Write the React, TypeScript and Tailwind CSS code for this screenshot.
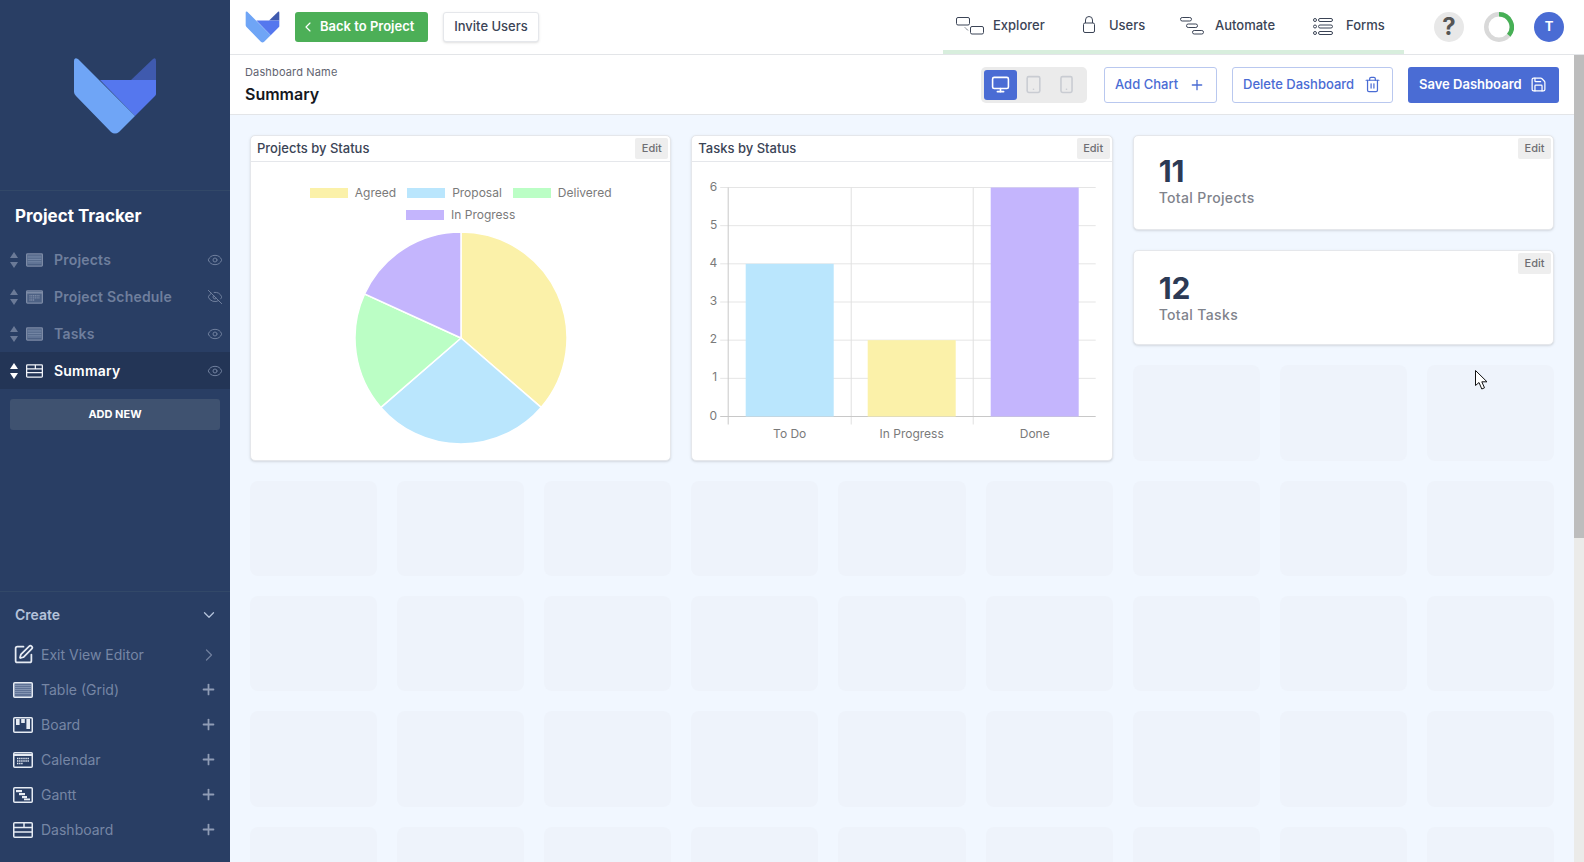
import React from "react";
import { ChevronDown, ChevronLeft, ChevronRight, Eye, EyeOff, Monitor, Plus, Save, Smartphone, SquarePen, Tablet, Trash2 } from "lucide-react";

function Logo({ className }: { className: string }) {
  return (
    <svg viewBox="0 0 84 78" className={className}>
      <path d="M58 23 L80 2 Q83 0 83 4 V23 Z" fill="#3f5aae" />
      <path d="M27 23 H83 V37 Q83 38 82 39 L62 59 Z" fill="#5577ee" />
      <path d="M1 4 Q1 0 5 2 L62 59 L46 75 Q42 78 38 75 L3 39 Q1 37 1 35 Z" fill="#6fa5f6" />
    </svg>
  );
}

// small view type icons used in the sidebar
function ViewIcon({ type, className, line, fill }: { type: string; className: string; line: string; fill: string }) {
  return (
    <svg viewBox="0 0 20 16" className={className} fill="none">
      {type !== "dashboard" && <rect x="1" y="1" width="18" height="14" fill={fill} />}
      <rect x="0.75" y="0.75" width="18.5" height="14.5" rx="1" stroke={line} strokeWidth="1.5" />
      {type === "table" &&
        [3.5, 5.5, 7.5, 9.5, 11.5].map((y) => <path key={y} d={`M2 ${y}H18`} stroke="#93a3bf" strokeWidth="0.7" />)}
      {type === "calendar" && (
        <>
          <path d="M1 3H19" stroke={line} strokeWidth="2" />
          <path d="M4 6.5H16M4 9H16" stroke={line} strokeWidth="1.6" strokeDasharray="1.4 0.7" />
          <path d="M4 11.5H10" stroke={line} strokeWidth="1.6" strokeDasharray="1.4 0.7" />
        </>
      )}
      {type === "board" && (
        <>
          <rect x="3" y="2" width="3.6" height="6" fill={line} />
          <rect x="8.2" y="2" width="3.6" height="4" fill={line} />
          <rect x="13.4" y="2" width="3.6" height="10" fill={line} />
        </>
      )}
      {type === "gantt" && (
        <>
          <rect x="3" y="3" width="6" height="2.2" fill={line} />
          <rect x="6" y="6" width="6" height="2.2" fill={line} />
          <rect x="9" y="9" width="5" height="2.2" fill={line} />
          <rect x="11" y="11.5" width="6" height="1.8" fill={line} />
        </>
      )}
      {type === "dashboard" && <path d="M1 5.5H19M1 10H19M11 1V5.5" stroke={line} strokeWidth="1.5" />}
    </svg>
  );
}

const views = [
  { name: "Projects", icon: "table", hidden: false, active: false },
  { name: "Project Schedule", icon: "calendar", hidden: true, active: false },
  { name: "Tasks", icon: "table", hidden: false, active: false },
  { name: "Summary", icon: "dashboard", hidden: false, active: true },
];

const creators = [
  { name: "Table (Grid)", icon: "table", fill: "#5f7296" },
  { name: "Board", icon: "board", fill: "transparent" },
  { name: "Calendar", icon: "calendar", fill: "transparent" },
  { name: "Gantt", icon: "gantt", fill: "transparent" },
  { name: "Dashboard", icon: "dashboard", fill: "transparent" },
];

function Sidebar() {
  return (
    <aside className="flex h-full w-[230px] shrink-0 flex-col bg-[#293e64]">
      <div className="flex h-[191px] shrink-0 items-start justify-center border-b border-[#324868] pt-[57px]">
        <Logo className="h-[78px] w-[84px]" />
      </div>
      <div className="flex h-[50px] shrink-0 items-center pl-[15px] pt-[2px] text-[17px] font-bold text-white">Project Tracker</div>
      {views.map((v) => (
        <div key={v.name} className={`flex h-[37px] shrink-0 items-center pl-[10px] pr-[7px] ${v.active ? "bg-[#233556]" : ""}`}>
          <div className={`flex w-[8px] flex-col gap-[4px] ${v.active ? "text-white" : "text-[#6b7a97]"}`}>
            <svg viewBox="0 0 8 6" className="h-[6px] w-[8px]" fill="currentColor"><path d="M4 0L8 6H0Z" /></svg>
            <svg viewBox="0 0 8 6" className="h-[6px] w-[8px]" fill="currentColor"><path d="M0 0H8L4 6Z" /></svg>
          </div>
          <ViewIcon
            type={v.icon}
            className="ml-2 h-[14px] w-[17px]"
            line={v.active ? "#f1f4f9" : "#7d8ba6"}
            fill={v.active ? "transparent" : "#4d6184"}
          />
          <span className={`ml-[11px] flex-1 text-[14px] font-semibold tracking-[0.2px] ${v.active ? "text-white" : "text-[#6f7f9d]"}`}>{v.name}</span>
          {v.hidden ? (
            <EyeOff className="h-[16px] w-[16px] text-[#6f7f9d]" strokeWidth={1.5} />
          ) : (
            <Eye className="h-[16px] w-[16px] text-[#6f7f9d]" strokeWidth={1.5} />
          )}
        </div>
      ))}
      <button className="mx-[10px] mt-[10px] h-[31px] shrink-0 rounded-[3px] bg-[#3f5270] text-[11px] font-bold text-white">ADD NEW</button>

      <div className="mt-auto h-[271px] shrink-0 border-t border-[#324868]">
        <div className="flex h-[45px] items-center justify-between pl-[15px] pr-[12px]">
          <span className="text-[14px] font-semibold text-[#b4c2da]">Create</span>
          <ChevronDown className="h-[18px] w-[18px] text-[#b4c2da]" strokeWidth={1.75} />
        </div>
        <div className="flex h-[35px] items-center pl-[13px] pr-[11px]">
          <SquarePen className="h-[21px] w-[21px] text-[#e6ebf3]" strokeWidth={2} />
          <span className="ml-[7px] flex-1 text-[14px] text-[#7686a4]">Exit View Editor</span>
          <ChevronRight className="h-[20px] w-[20px] text-[#6f7f9d]" strokeWidth={1.5} />
        </div>
        {creators.map((c) => (
          <div key={c.name} className="flex h-[35px] items-center pl-[13px] pr-[13px]">
            <ViewIcon type={c.icon} className="h-[16px] w-[20px]" line="#e6ebf3" fill={c.fill} />
            <span className="ml-[8px] flex-1 text-[14px] text-[#7686a4]">{c.name}</span>
            <Plus className="h-[17px] w-[17px] text-[#8f9cb5]" strokeWidth={2.5} />
          </div>
        ))}
      </div>
    </aside>
  );
}

function NavItem({ icon, label, iconBox, textGap }: { icon: React.ReactNode; label: string; iconBox: string; textGap: string }) {
  return (
    <div className={`flex shrink-0 items-center ${iconBox}`}>
      {icon}
      <span className={`${textGap} text-[13px] font-medium text-[#3b4456]`}>{label}</span>
    </div>
  );
}

function TopBar() {
  return (
    <header className="flex h-[55px] shrink-0 items-stretch border-b border-[#e3e5e8] bg-white">
      <div className="flex items-center pb-[1px] pl-[15px]">
        <Logo className="h-[32px] w-[35px]" />
        <button className="ml-[15px] flex h-[30px] w-[133px] items-center rounded-[3px] bg-[#4caf57] pl-[5px] text-[13px] font-semibold text-white">
          <ChevronLeft className="h-[16px] w-[16px]" strokeWidth={1.75} />
          <span className="ml-[4px]">Back to Project</span>
        </button>
        <button className="ml-[15px] h-[30px] w-[96px] rounded-[3px] border border-[#e5e7eb] bg-white pt-[1px] text-[13px] font-medium text-[#3b4456] shadow-sm">
          Invite Users
        </button>
      </div>
      <nav className="ml-[404px] flex h-[54px] w-[461px] shrink-0 items-center border-b-[4px] border-[#d8eedd] pl-[13px] pt-[2px]">
        <NavItem
          iconBox="w-[127px]"
          textGap="ml-[9px]"
          label="Explorer"
          icon={
            <svg viewBox="0 0 28 18" className="h-[18px] w-[28px]" fill="none" stroke="#3b4456" strokeWidth="1">
              <rect x="0.5" y="0.5" width="13" height="7.5" rx="1.5" />
              <rect x="14.5" y="9.5" width="13" height="7.5" rx="1.5" />
              <path d="M9 10.5L12.5 14" strokeDasharray="1.5 1" />
            </svg>
          }
        />
        <NavItem
          iconBox="w-[97px]"
          textGap="ml-[14px]"
          label="Users"
          icon={
            <svg viewBox="0 0 12 17" className="-mt-[4px] h-[17px] w-[12px]" fill="none" stroke="#3b4456" strokeWidth="1">
              <rect x="0.5" y="7" width="11" height="9.5" rx="1.5" />
              <path d="M2.5 7V4a3.5 3.5 0 0 1 7 0v3" />
            </svg>
          }
        />
        <NavItem
          iconBox="w-[133px]"
          textGap="ml-[11px]"
          label="Automate"
          icon={
            <svg viewBox="0 0 24 18" className="h-[18px] w-[24px]" fill="none" stroke="#3b4456" strokeWidth="1">
              <rect x="0.5" y="0.5" width="11" height="3.5" rx="1.7" />
              <rect x="6.5" y="7" width="11" height="3.5" rx="1.7" />
              <rect x="12.5" y="13.5" width="11" height="3.5" rx="1.7" />
            </svg>
          }
        />
        <NavItem
          iconBox=""
          textGap="ml-[13px]"
          label="Forms"
          icon={
            <svg viewBox="0 0 20 17" className="h-[17px] w-[20px]" fill="none" stroke="#3b4456" strokeWidth="1">
              {[2, 8.5, 15].map((y) => (
                <g key={y}>
                  <circle cx="2" cy={y} r="1.5" />
                  <rect x="5.5" y={y - 1.5} width="14" height="3" rx="1.5" />
                </g>
              ))}
            </svg>
          }
        />
      </nav>
      <div className="ml-[30px] flex items-center gap-[20px] pb-[1px]">
        <div className="flex h-[30px] w-[30px] items-center justify-center rounded-full bg-[#e8e8e8] text-[24px] font-bold text-[#555]">?</div>
        <svg viewBox="0 0 30 30" className="h-[30px] w-[30px]" fill="none">
          <circle cx="15" cy="15" r="12.75" stroke="#d9d9d9" strokeWidth="4.5" />
          <path d="M15 2.25A12.75 12.75 0 0 1 24.77 23.2" stroke="#46b055" strokeWidth="4.5" />
        </svg>
        <div className="flex h-[30px] w-[30px] items-center justify-center rounded-full bg-[#4a6cd4] text-[13px] font-bold text-white">T</div>
      </div>
    </header>
  );
}

function Toolbar() {
  return (
    <div className="flex h-[60px] shrink-0 items-center border-b border-[#e3e5e8] bg-white pl-[15px] pr-[15px]">
      <div className="flex flex-col">
        <span className="text-[11px] leading-[14px] tracking-[0.15px] text-[#5f6470]">Dashboard Name</span>
        <span className="mt-[5px] text-[16px] font-semibold leading-[20px] text-[#15181e]">Summary</span>
      </div>
      <div className="ml-auto flex h-[36px] w-[106px] items-center rounded-[5px] bg-[#ebebeb] pl-[3px]">
        <div className="flex h-[30px] w-[33px] items-center justify-center rounded-[3px] bg-[#4a6cd4]">
          <Monitor className="h-[19px] w-[19px] text-white" strokeWidth={2} />
        </div>
        <Tablet className="ml-[7px] h-[19px] w-[19px] text-[#c9ccd2]" strokeWidth={2} />
        <Smartphone className="ml-[14px] h-[19px] w-[19px] text-[#c9ccd2]" strokeWidth={2} />
      </div>
      <button className="ml-[17px] flex h-[36px] w-[113px] items-center justify-between rounded-[3px] border border-[#b9c8ef] pl-[10px] pr-[11px] text-[13px] font-medium text-[#4a6cd4]">
        Add Chart
        <Plus className="h-[16px] w-[16px]" strokeWidth={2} />
      </button>
      <button className="ml-[15px] flex h-[36px] w-[161px] items-center justify-between rounded-[3px] border border-[#b9c8ef] pl-[10px] pr-[11px] text-[13px] font-medium text-[#4a6cd4]">
        Delete Dashboard
        <Trash2 className="h-[17px] w-[17px]" strokeWidth={1.75} />
      </button>
      <button className="ml-[15px] flex h-[36px] w-[151px] items-center justify-between rounded-[3px] bg-[#4a6cd4] pl-[11px] pr-[12px] text-[13px] font-semibold text-white">
        Save Dashboard
        <Save className="h-[17px] w-[17px]" strokeWidth={1.75} />
      </button>
    </div>
  );
}

function EditChip() {
  return (
    <span className="absolute right-[2px] top-[2px] flex h-[21px] w-[33px] items-center justify-center rounded-[2px] bg-[#eeeeee] text-[11px] font-medium text-[#6e6e73]">
      Edit
    </span>
  );
}

function ChartCard({ title, children }: { title: string; children: React.ReactNode }) {
  return (
    <div className="relative col-span-3 row-span-3 overflow-hidden rounded-[5px] border border-[#e5e7eb] bg-white shadow-sm">
      <div className="flex h-[26px] items-center border-b border-[#e5e7eb] pl-[6px] pt-[1px] text-[13px] font-medium text-[#3b4456]">{title}</div>
      <EditChip />
      {children}
    </div>
  );
}

function StatCard({ value, label, top }: { value: number; label: string; top: string }) {
  return (
    <div className={`relative col-span-3 rounded-[5px] border border-[#e5e7eb] bg-white pl-[25px] shadow-sm ${top}`}>
      <EditChip />
      <div className="text-[30px] font-bold leading-[34px] text-[#2c3a55]">{value}</div>
      <div className="text-[14px] font-medium leading-[20px] tracking-[0.35px] text-[#7f838c]">{label}</div>
    </div>
  );
}

const slices = [
  { value: 4, color: "#fbf1a9" },
  { value: 3, color: "#bae6fd" },
  { value: 2, color: "#bbfec5" },
  { value: 2, color: "#c4b5fd" },
];

const legend = [
  [
    { label: "Agreed", color: "#fbf1a9" },
    { label: "Proposal", color: "#bae6fd" },
    { label: "Delivered", color: "#bbfec5" },
  ],
  [{ label: "In Progress", color: "#c4b5fd" }],
];

function PieChart() {
  let start = 0;
  const point = (a: number) => {
    const rad = (a * Math.PI) / 180;
    return `${107 + 106 * Math.sin(rad)} ${107 - 106 * Math.cos(rad)}`;
  };
  return (
    <div className="flex flex-col items-center pt-[20px]">
      {legend.map((row, i) => (
        <div key={i} className="flex h-[22px] items-center gap-[11px]">
          {row.map((l) => (
            <div key={l.label} className="flex items-center">
              <span className="h-[10px] w-[38px]" style={{ backgroundColor: l.color }} />
              <span className="ml-[7px] text-[12px] text-[#7a7a7a]">{l.label}</span>
            </div>
          ))}
        </div>
      ))}
      <svg viewBox="0 0 214 214" className="mt-[5px] h-[214px] w-[214px]">
        {slices.map((s) => {
          const end = start + (s.value / 11) * 360;
          const d = `M107 107L${point(start)}A106 106 0 0 1 ${point(end)}Z`;
          start = end;
          return <path key={s.color} d={d} fill={s.color} stroke="#fff" strokeWidth="1.5" />;
        })}
      </svg>
    </div>
  );
}

function BarChart() {
  // drawn in pixels from the card's inner top left corner
  const ox = 692.3;
  const oy = 162;
  const left = 728.5 - ox;
  const right = 1096 - ox;
  const top = 187.5 - oy;
  const bottom = 416.5 - oy;
  const step = (bottom - top) / 6;
  const bars = [
    { x: 746, label: "To Do", value: 4, color: "#bae6fd" },
    { x: 868, label: "In Progress", value: 2, color: "#fbf1a9" },
    { x: 991, label: "Done", value: 6, color: "#c4b5fd" },
  ];
  return (
    <svg viewBox="0 0 419 296" className="h-[296px] w-[419px]">
      {[0, 1, 2, 3, 4, 5].map((n) => (
        <path key={n} d={`M${left - 8} ${bottom - (n + 1) * step}H${right}`} stroke="#e5e5e5" />
      ))}
      <path d={`M${left} ${top}V${bottom + 8}`} stroke="#c8c8c8" />
      <path d={`M${851.5 - ox} ${top}V${bottom + 8}M${973.5 - ox} ${top}V${bottom + 8}`} stroke="#e0e0e0" />
      <path d={`M${left - 8} ${bottom}H${right}`} stroke="#c8c8c8" />
      {bars.map((b) => (
        <g key={b.label}>
          <rect x={b.x - ox} y={bottom - b.value * step} width="88" height={b.value * step} fill={b.color} />
          <text x={b.x - ox + 44} y={bottom + 21.5} textAnchor="middle" fontSize="12" fill="#7a7a7a">{b.label}</text>
        </g>
      ))}
      {[0, 1, 2, 3, 4, 5, 6].map((n) => (
        <text key={n} x={left - 11} y={bottom - n * step + 3} textAnchor="end" fontSize="12" fill="#7a7a7a">{n}</text>
      ))}
    </svg>
  );
}

function Canvas() {
  return (
    <div className="min-h-0 flex-1 overflow-hidden bg-[#f1f7ff] pl-[20px] pr-[20px] pt-[19.5px]">
      <div className="grid grid-cols-9 auto-rows-[95.4px] gap-5">
        <ChartCard title="Projects by Status">
          <PieChart />
        </ChartCard>
        <ChartCard title="Tasks by Status">
          <BarChart />
        </ChartCard>
        <StatCard value={11} label="Total Projects" top="pt-[18px]" />
        <StatCard value={12} label="Total Tasks" top="pt-[20px]" />
        {Array.from({ length: 39 }).map((_, i) => (
          <div key={i} className="rounded-lg bg-[#eef3fb]" />
        ))}
      </div>
    </div>
  );
}

export default function App() {
  return (
    <div className="relative flex h-screen w-full overflow-hidden [font-family:Inter,sans-serif]">
      <Sidebar />
      <div className="flex min-w-0 flex-1 flex-col">
        <TopBar />
        <div className="flex min-h-0 flex-1">
          <div className="flex min-w-0 flex-1 flex-col">
            <Toolbar />
            <Canvas />
          </div>
          <div className="w-[10px] shrink-0 bg-[#ebebe9]">
            <div className="h-[483px] bg-[#bdbdbd]" />
          </div>
        </div>
      </div>
      {/* mouse pointer captured in the screenshot */}
      <svg viewBox="0 0 13 20" className="absolute left-[1475px] top-[370px] h-[20px] w-[13px]">
        <path d="M0.5 0.5V15.5L4 12.5L6.8 19L9.5 17.8L6.8 11.8H12Z" fill="#fff" stroke="#111" strokeWidth="1" />
      </svg>
    </div>
  );
}
